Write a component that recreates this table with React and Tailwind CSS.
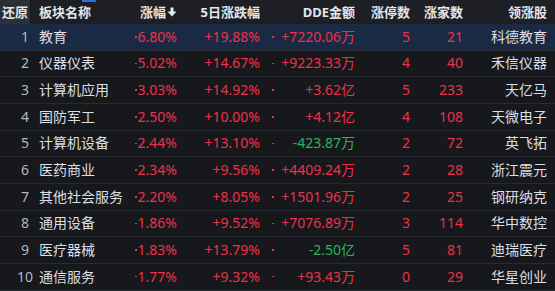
const rows = [
  { i: 1, name: "教育", zf: "6.80%", d5: "+19.88%", dde: "+7220.06万", up: true, zt: 5, zj: 21, lead: "科德教育" },
  { i: 2, name: "仪器仪表", zf: "5.02%", d5: "+14.67%", dde: "+9223.33万", up: true, zt: 4, zj: 40, lead: "禾信仪器" },
  { i: 3, name: "计算机应用", zf: "3.03%", d5: "+14.92%", dde: "+3.62亿", up: true, zt: 5, zj: 233, lead: "天亿马" },
  { i: 4, name: "国防军工", zf: "2.50%", d5: "+10.00%", dde: "+4.12亿", up: true, zt: 4, zj: 108, lead: "天微电子" },
  { i: 5, name: "计算机设备", zf: "2.44%", d5: "+13.10%", dde: "-423.87万", up: false, zt: 2, zj: 72, lead: "英飞拓" },
  { i: 6, name: "医药商业", zf: "2.34%", d5: "+9.56%", dde: "+4409.24万", up: true, zt: 2, zj: 28, lead: "浙江震元" },
  { i: 7, name: "其他社会服务", zf: "2.20%", d5: "+8.05%", dde: "+1501.96万", up: true, zt: 2, zj: 25, lead: "钢研纳克" },
  { i: 8, name: "通用设备", zf: "1.86%", d5: "+9.52%", dde: "+7076.89万", up: true, zt: 3, zj: 114, lead: "华中数控" },
  { i: 9, name: "医疗器械", zf: "1.83%", d5: "+13.79%", dde: "-2.50亿", up: false, zt: 5, zj: 81, lead: "迪瑞医疗" },
  { i: 10, name: "通信服务", zf: "1.77%", d5: "+9.32%", dde: "+93.43万", up: true, zt: 0, zj: 29, lead: "华星创业" },
];

const font = { fontFamily: '"Noto Sans", "Noto Sans CJK SC", sans-serif' };

function Row({ r }) {
  const hl = r.i === 1;
  return (
    <div
      className={
        "flex items-center h-[26.667px] border-b border-[#272a30] text-[14px] leading-none " +
        (hl ? "bg-[#1b2a44]" : "bg-[#16181c]")
      }
    >
      <div className="w-[39px] pl-[11px] text-center text-[#b4b7bc] whitespace-nowrap">{r.i}</div>
      <div className="w-[95px] text-[#dcdfe3] whitespace-nowrap">{r.name}</div>
      <div className="w-[43px] flex items-center justify-between text-[#ee3149]">
        <span className="ml-[1px] w-[1.5px] h-[1.5px] bg-[#ee3149]" />
        <span>{r.zf}</span>
      </div>
      <div className="w-[83px] text-right text-[#ee3149]">{r.d5}</div>
      <div className="w-[95px] flex items-center justify-between">
        <span className="ml-[12px] w-[1.5px] h-[1.5px] bg-[#ee3149]" />
        <span className={r.up ? "text-[#ee3149]" : "text-[#2cb35c]"}>{r.dde}</span>
      </div>
      <div className="w-[55px] text-right text-[#ee3149]">{r.zt}</div>
      <div className="w-[53px] text-right text-[#ee3149]">{r.zj}</div>
      <div className="w-[84px] text-right text-[#dcdfe3] whitespace-nowrap">{r.lead}</div>
    </div>
  );
}

export default function App() {
  return (
    <div className="w-[555px] h-[291px] overflow-hidden bg-[#16181c]" style={font}>
      <div className="relative flex items-center h-[24px] bg-[#1d1f24] text-[13px] font-bold text-[#e4e6e9] leading-none">
        <div className="absolute top-0 left-[82px] w-[14px] h-[2px] bg-[#2f6fe0]" />
        <div className="w-[31px] h-full flex items-center justify-center bg-[#2c2f34] border-r border-[#15171a]">还原</div>
        <div className="w-[8px]" />
        <div className="w-[95px]">板块名称</div>
        <div className="w-[43px] flex items-center justify-end whitespace-nowrap">
          涨幅
          <svg width="10" height="10" viewBox="0 0 10 10" className="ml-[1px]">
            <rect x="3.5" y="0.5" width="3" height="5" fill="#e4e6e9" />
            <path d="M0.5 4.5 H9.5 L5 9.5 Z" fill="#e4e6e9" />
          </svg>
        </div>
        <div className="w-[83px] text-right">5日涨跌幅</div>
        <div className="w-[95px] text-right">DDE金额</div>
        <div className="w-[55px] text-right">涨停数</div>
        <div className="w-[53px] text-right">涨家数</div>
        <div className="w-[84px] text-right">领涨股</div>
      </div>
      {rows.map((r) => (
        <Row key={r.i} r={r} />
      ))}
    </div>
  );
}
